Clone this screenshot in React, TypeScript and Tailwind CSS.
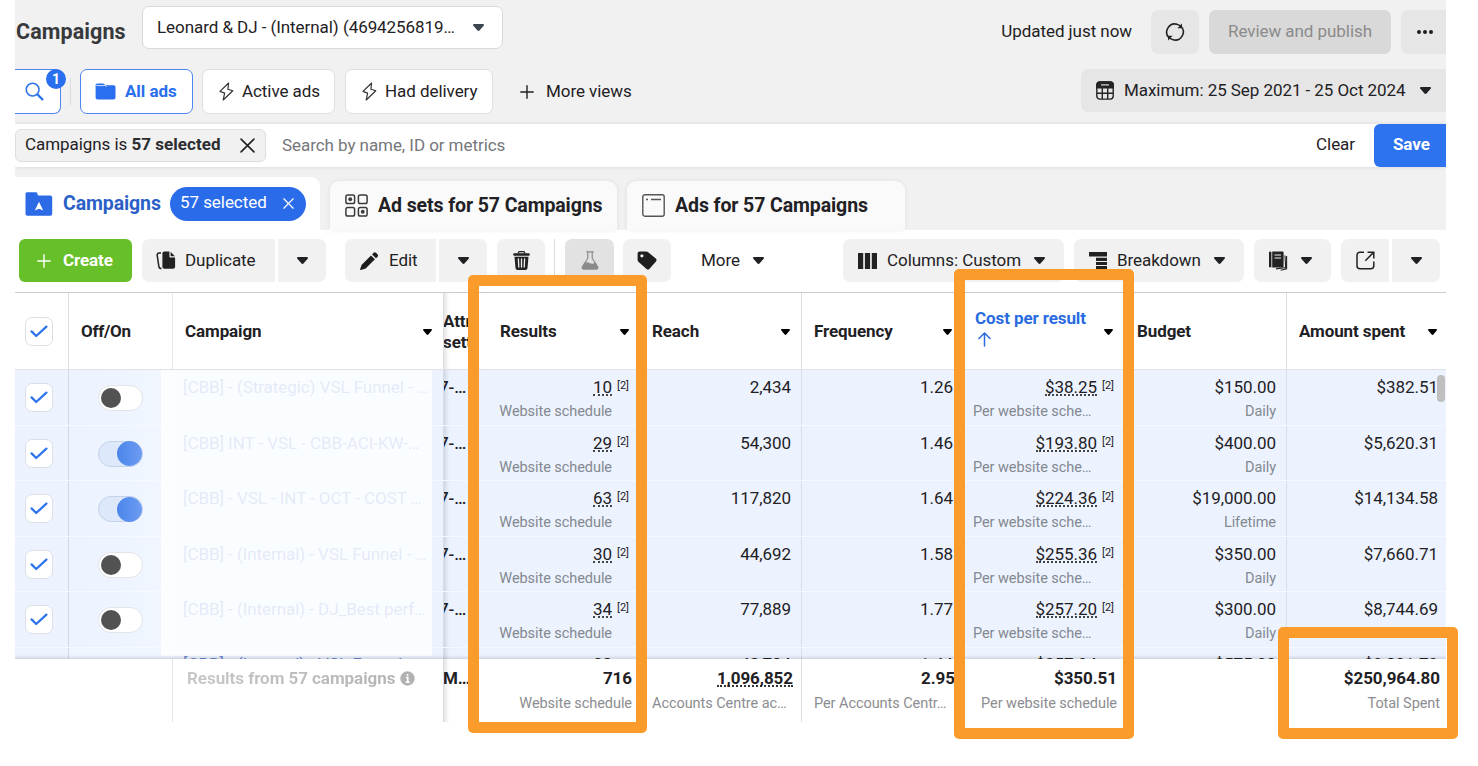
import type { ReactNode } from "react";

function Caret({ small = false }: { small?: boolean }) {
  return (
    <svg className={small ? "block w-[9px] h-[6px] shrink-0" : "block w-[11px] h-[7px] shrink-0"} viewBox="0 0 12 7" preserveAspectRatio="none" fill="currentColor">
      <path d="M1.2 0h9.6c1.1 0 1.5 1.1.8 1.8L7.1 6.5c-.6.6-1.6.6-2.2 0L.4 1.8C-.3 1.1.1 0 1.2 0z" />
    </svg>
  );
}

function Bolt() {
  return (
    <svg className="block w-[15px] h-[19px] shrink-0" viewBox="0 0 15 19" fill="none" stroke="#333" strokeWidth="1.2" strokeLinejoin="round">
      <path d="M9.6 1 1 9.4l4.6 1.7L4.2 18l9.6-9.2-4.9-1.5z" />
    </svg>
  );
}

function Plus() {
  return (
    <svg className="block w-[14px] h-[14px] shrink-0" viewBox="0 0 14 14" stroke="currentColor" strokeWidth="1.4" strokeLinecap="round">
      <path d="M7 .8v12.4M.8 7h12.4" />
    </svg>
  );
}

function Cross({ className }: { className: string }) {
  return (
    <svg className={className} viewBox="0 0 14 14" stroke="currentColor" strokeWidth="1.5" strokeLinecap="round">
      <path d="M1 1l12 12M13 1 1 13" />
    </svg>
  );
}

function Check() {
  return (
    <div className="flex h-[29px] w-[28px] items-center justify-center rounded-[7px] border border-[#dcdfe5] bg-white">
      <svg className="block h-[13px] w-[18px]" viewBox="0 0 18 13" fill="none" stroke="#2f74ea" strokeWidth="2.3" strokeLinecap="round" strokeLinejoin="round">
        <path d="M1.6 6.4 6.2 11 16.4 1.6" />
      </svg>
    </div>
  );
}

function Toggle({ on }: { on: boolean }) {
  return on ? (
    <div className="flex h-[26px] w-[45px] items-center justify-end rounded-full border border-[#c3d2e8] bg-[#dde9fa]">
      <div className="h-[25px] w-[25px] shrink-0 rounded-full bg-linear-to-r from-[#4b86ea] to-[#6d9cf2]" />
    </div>
  ) : (
    <div className="flex h-[26px] w-[45px] items-center rounded-full border border-[#e3e4e8] bg-white pl-[2px]">
      <div className="h-[20px] w-[20px] rounded-full bg-[#525252]" />
    </div>
  );
}

const GRID = "grid grid-cols-[54px_104px_271px_44px_152px_162px_161px_162px_162px_159px]";

function Head({ label, caret = true, className = "pr-[11px]" }: { label: ReactNode; caret?: boolean; className?: string }) {
  return (
    <div className={`flex items-center justify-between pt-[2px] pl-[12px] ${className}`}>
      <span className="whitespace-nowrap">{label}</span>
      {caret && (
        <span className="text-black">
          <Caret small />
        </span>
      )}
    </div>
  );
}

function Noted({ value, sub, left = false }: { value: string; sub: string; left?: boolean }) {
  return (
    <div className={left ? "flex flex-col pr-[11px] pl-[10px]" : "flex flex-col pr-[11px]"}>
      <div className="flex justify-end">
        <span className="mt-[8px] h-[18px] border-b-2 border-dotted border-[#444] leading-[19px]">{value}</span>
        <span className="ml-[5px] pt-[9px] text-[11px] leading-[13px] tracking-normal">[2]</span>
      </div>
      <div className={left ? "mt-[7px] text-[14.5px] leading-[18px] text-[#84888f]" : "mt-[7px] mr-[17px] text-right text-[14.5px] leading-[18px] text-[#84888f]"}>{sub}</div>
    </div>
  );
}

function Plain({ value, sub, className }: { value: string; sub?: string; className: string }) {
  return (
    <div className={`text-right ${className}`}>
      <div className="mt-[8px] h-[18px] leading-[19px]">{value}</div>
      {sub && <div className="mt-[7px] text-[14.5px] leading-[18px] text-[#84888f]">{sub}</div>}
    </div>
  );
}

const rows = [
  { on: false, name: "[CBB] - (Strategic) VSL Funnel - …", res: "10", reach: "2,434", freq: "1.26", cost: "$38.25", budget: "$150.00", per: "Daily", spent: "$382.51" },
  { on: true, name: "[CBB] INT - VSL - CBB-ACI-KW-…", res: "29", reach: "54,300", freq: "1.46", cost: "$193.80", budget: "$400.00", per: "Daily", spent: "$5,620.31" },
  { on: true, name: "[CBB] - VSL - INT - OCT - COST …", res: "63", reach: "117,820", freq: "1.64", cost: "$224.36", budget: "$19,000.00", per: "Lifetime", spent: "$14,134.58" },
  { on: false, name: "[CBB] - (Internal) - VSL Funnel - …", res: "30", reach: "44,692", freq: "1.58", cost: "$255.36", budget: "$350.00", per: "Daily", spent: "$7,660.71" },
  { on: false, name: "[CBB] - (Internal) - DJ_Best perf…", res: "34", reach: "77,889", freq: "1.77", cost: "$257.20", budget: "$300.00", per: "Daily", spent: "$8,744.69" },
];

const nextRow = { name: "[CBB] - (Internal) - VSL Funnel", res: "38", reach: "48,784", freq: "1.44", cost: "$257.94", budget: "$575.00", spent: "$9,801.72" };

export default function App() {
  return (
    <div className="relative h-[766px] w-[1478px] overflow-hidden bg-white font-['Roboto',sans-serif] text-[17px] tracking-[-0.06px] text-[#1f2124]">
      <div className="ml-[15px] w-[1431px] overflow-hidden">
        <header className="h-[230px] bg-[#f1f1f1]">
          <div className="flex h-[69px]">
            <h1 className="ml-[1px] mt-[19px] w-[126px] text-[21.5px] leading-[26px] font-bold tracking-[0.1px] text-[#37393c]">Campaigns</h1>
            <div className="mt-[6px] flex h-[43px] w-[361px] items-center rounded-[7px] border border-[#d8d9db] bg-white pl-[14px] pr-[18px]">
              <span className="flex-1 whitespace-nowrap">Leonard &amp; DJ - (Internal) (4694256819…</span>
              <span className="text-[#3c4650]">
                <Caret />
              </span>
            </div>
            <div className="ml-auto mt-[10px] flex h-[44px] items-center">
              <span className="whitespace-nowrap">Updated just now</span>
              <div className="ml-[19px] flex h-[44px] w-[48px] items-center justify-center rounded-[7px] bg-[#e6e6e6]">
                <svg className="block h-[20px] w-[20px]" viewBox="0 0 20 20" fill="none" stroke="#222" strokeWidth="1.6">
                  <path d="M4.200 16A8.200 8.200 0 0 1 12 2.200M15.800 4A8.200 8.200 0 0 1 8 17.800" />
                  <path d="M11.400 2.200A8.200 8.200 0 0 1 15.600 4M8.600 17.800A8.200 8.200 0 0 1 4.400 16" />
                  <path d="M17 1.600v4.600h-4.600zM3 18.400v-4.600h4.600z" fill="#222" stroke="none" />
                </svg>
              </div>
              <div className="ml-[10px] flex h-[44px] w-[182px] items-center justify-center rounded-[7px] bg-[#d9d9d9] whitespace-nowrap text-[#8b8b8b]">Review and publish</div>
              <div className="ml-[10px] flex h-[44px] w-[45px] items-center gap-[2px] rounded-l-[7px] bg-[#e6e6e6] pl-[16px]">
                <i className="h-[4px] w-[4px] rounded-full bg-[#1f1f1f]" />
                <i className="h-[4px] w-[4px] rounded-full bg-[#1f1f1f]" />
                <i className="h-[4px] w-[4px] rounded-full bg-[#1f1f1f]" />
              </div>
            </div>
          </div>

          <div className="flex h-[55px]">
            <div className="relative flex h-[45px] w-[46px] items-center rounded-r-[7px] border border-l-0 border-[#4d86ef] bg-white pl-[10px]">
              <svg className="block h-[19px] w-[19px]" viewBox="0 0 19 19" fill="none" stroke="#2f74ea" strokeLinecap="round">
                <circle cx="7.6" cy="7.6" r="6.4" strokeWidth="1.6" />
                <path d="M12.6 12.6 17.4 17.4" strokeWidth="2.2" />
              </svg>
              <span className="absolute -top-[1px] left-[31px] h-[20px] w-[20px] rounded-full bg-[#2a6fee] text-center text-[14px] leading-[20px] font-bold tracking-normal text-white">1</span>
            </div>
            <div className="mt-[9px] ml-[9px] h-[27px] w-px bg-[#dcdcdc]" />
            <div className="ml-[9px] flex h-[45px] w-[113px] items-center rounded-[7px] border border-[#4d86ef] bg-white pl-[14px] font-bold text-[#2a6fee]">
              <svg className="mr-[9px] block h-[17px] w-[21px] shrink-0" viewBox="0 0 21 17" fill="#2a6fee">
                <path d="M.6 2.4C.6 1.2 1.4.5 2.6.5H8c.8 0 1.2.3 1.7.9l.5.8h8.3c1.3 0 2 .8 2 2v10.4c0 1.2-.8 2-2 2H2.6c-1.2 0-2-.8-2-2z" />
                <path d="M1.2 2.6h9.4l1.1 1.3" stroke="#fff" strokeWidth=".8" fill="none" />
              </svg>
              <span className="tracking-[-0.05px] whitespace-nowrap">All ads</span>
            </div>
            <div className="ml-[9px] flex h-[45px] w-[133px] items-center rounded-[7px] border border-[#dfdfdf] bg-white pl-[16px]">
              <Bolt />
              <span className="ml-[8px] whitespace-nowrap">Active ads</span>
            </div>
            <div className="ml-[10px] flex h-[45px] w-[148px] items-center rounded-[7px] border border-[#dfdfdf] bg-white pl-[16px]">
              <Bolt />
              <span className="ml-[8px] whitespace-nowrap">Had delivery</span>
            </div>
            <div className="ml-[27px] flex h-[45px] items-center">
              <Plus />
              <span className="ml-[12px] whitespace-nowrap">More views</span>
            </div>
            <div className="ml-auto flex h-[43px] w-[365px] items-center rounded-l-[7px] bg-[#e6e6e6] pl-[15px]">
              <svg className="block h-[19px] w-[18px] shrink-0" viewBox="0 0 18 19" fill="none" stroke="#242424" strokeWidth="1.4">
                <rect x=".8" y=".9" width="16.4" height="17.2" rx="3" />
                <path d="M.8 6.8V3.9c0-1.7 1.3-3 3-3h10.4c1.700 0 3 1.300 3 3v2.900z" fill="#242424" />
                <path d="M5 3.900h8" stroke="#ddd" strokeWidth="1.200" />
                <path d="M1 12.300h16M6.300 7v11M11.700 7v11" />
              </svg>
              <span className="ml-[10px] w-[296px] whitespace-nowrap">Maximum: 25 Sep 2021 - 25 Oct 2024</span>
              <Caret />
            </div>
          </div>

          <div className="flex h-[43px] items-center bg-white shadow-[0_0_4px_rgba(0,0,0,0.12)]">
            <div className="flex h-[33px] w-[251px] items-center rounded-[6px] border border-[#dedede] bg-[#f1f1f1] pl-[9px]">
              <span className="w-[215px] pb-px whitespace-nowrap">
                Campaigns is <b className="font-bold tracking-[0.04px] text-[#2b2d30]">57 selected</b>
              </span>
              <Cross className="block h-[15px] w-[15px] shrink-0" />
            </div>
            <span className="ml-[16px] whitespace-nowrap text-[#75777a]">Search by name, ID or metrics</span>
            <span className="ml-auto pb-px">Clear</span>
            <div className="ml-[19px] flex h-[43px] w-[72px] items-center rounded-l-[6px] bg-[#2d72ee] pb-px pl-[19px] font-bold tracking-[-0.1px] text-white">Save</div>
          </div>

          <div className="flex h-[63px] items-end">
            <div className="flex h-[53px] w-[305px] items-center rounded-tr-[9px] bg-white pl-[10px]">
              <svg className="block h-[24px] w-[28px] shrink-0" viewBox="0 0 28 24">
                <path d="M.5 2C.5.800 1.300.200 2.400.200h8.200c1 0 1.500.500 1.800 1.400l.500 1.800h12.300c1.200 0 2 .800 2 2v16.400c0 1.200-.800 2-2 2H2.400C1.200 23.800.500 23 .500 21.800z" fill="#2d6ae6" />
                <path d="M14 9.800 18.200 18.500 14 16.800 9.800 18.500z" fill="#fff" />
              </svg>
              <span className="ml-[10px] w-[107px] text-[19.5px] font-bold tracking-[-0.1px] text-[#2b5fc8]">Campaigns</span>
              <div className="flex h-[34px] w-[136px] items-center rounded-full bg-[#2a6be9] pb-px pl-[10px] text-white">
                <span className="w-[103px] whitespace-nowrap">57 selected</span>
                <Cross className="block h-[11px] w-[11px] shrink-0" />
              </div>
            </div>
            <div className="ml-[10px] flex h-[49px] w-[287px] items-center rounded-t-[9px] bg-[#fafafa] pl-[15px] shadow-[0_0_5px_rgba(0,0,0,0.08)]">
              <svg className="block h-[23px] w-[23px] shrink-0" viewBox="0 0 23 23" fill="none" stroke="#3a3a3a" strokeWidth="1.500">
                <rect x=".900" y=".900" width="8.700" height="8.700" rx="1.800" />
                <rect x="13.400" y=".900" width="8.700" height="8.700" rx="1.800" />
                <rect x=".900" y="13.400" width="8.700" height="8.700" rx="1.800" />
                <rect x="13.400" y="13.400" width="8.700" height="8.700" rx="1.800" />
                <g fill="#3a3a3a" stroke="none">
                  <circle cx="5.250" cy="5.250" r="1.900" />
                  <circle cx="17.750" cy="17.750" r="1.900" />
                </g>
              </svg>
              <span className="ml-[10px] text-[19.5px] font-bold tracking-[-0.1px] whitespace-nowrap">Ad sets for 57 Campaigns</span>
            </div>
            <div className="ml-[10px] flex h-[49px] w-[278px] items-center rounded-t-[9px] bg-[#fafafa] pl-[15px] shadow-[0_0_5px_rgba(0,0,0,0.08)]">
              <svg className="block h-[23px] w-[23px] shrink-0" viewBox="0 0 23 23" fill="none" stroke="#555" strokeWidth="1.400">
                <rect x=".800" y=".800" width="21.400" height="21.400" rx="2" />
                <path d="M4 5.500h2M9 5.500h10" />
              </svg>
              <span className="ml-[10px] text-[19.5px] font-bold tracking-[-0.1px] whitespace-nowrap">Ads for 57 Campaigns</span>
            </div>
          </div>
        </header>

        <div className="flex h-[62px] bg-white pt-[9px] pl-[4px]">
          <div className="flex h-[43px] w-[113px] items-center rounded-[6px] bg-[#67bf2a] pl-[18px] font-bold text-white">
            <Plus />
            <span className="ml-[12px] tracking-[-0.1px]">Create</span>
          </div>
          <div className="ml-[10px] flex h-[43px] w-[133px] items-center rounded-l-[7px] bg-[#f1f1f1] pl-[14px]">
            <svg className="block h-[19px] w-[20px] shrink-0" viewBox="0 0 20 19">
              <path d="M8.400.500h5v5c0 .700.400 1.100 1.100 1.100h4.600v9.200c0 1.200-.800 2-2 2H8.400c-1.200 0-2-.800-2-2V2.500c0-1.200.800-2 2-2z" fill="#222" />
              <path d="M14.600.700v4.600h4.300z" fill="#222" />
              <path d="M5 2H3.100C1.700 2 1 3 1.200 4.300l1.700 11.300c.200 1.400 1 2 2.600 2" fill="none" stroke="#222" strokeWidth="1.500" />
            </svg>
            <span className="ml-[9px]">Duplicate</span>
          </div>
          <div className="ml-[3px] flex h-[43px] w-[48px] items-center justify-center rounded-r-[7px] bg-[#f1f1f1]">
            <Caret />
          </div>
          <div className="ml-[19px] flex h-[43px] w-[91px] items-center rounded-l-[7px] bg-[#f1f1f1] pl-[15px]">
            <svg className="block h-[18px] w-[19px] shrink-0" viewBox="0 0 19 18" fill="#1c1c1c">
              <path d="M13.600.800c.800-.700 1.700-.700 2.400 0l1.600 1.600c.700.700.700 1.600 0 2.400l-1.600 1.500-3.900-3.900zM11 3.400l3.900 3.900-9 8.900c-.300.300-.600.500-1 .600L.800 18c-.500.100-.800-.200-.700-.700l1.300-3.900c.100-.400.300-.700.600-1z" />
            </svg>
            <span className="ml-[10px]">Edit</span>
          </div>
          <div className="ml-[3px] flex h-[43px] w-[48px] items-center justify-center rounded-r-[7px] bg-[#f1f1f1]">
            <Caret />
          </div>
          <div className="ml-[10px] flex h-[43px] w-[48px] items-center justify-center rounded-[7px] bg-[#f1f1f1]">
            <svg className="block h-[19px] w-[17px]" viewBox="0 0 17 19">
              <path d="M5.200 2.400C5.200 1.200 6 .600 7 .600h3c1 0 1.800.600 1.800 1.800" fill="none" stroke="#222" strokeWidth="1.300" />
              <rect x=".200" y="2.200" width="16.600" height="2.600" rx="1.200" fill="#222" />
              <path d="M1.500 5.800h14l-1 11.300c-.100 1.100-.800 1.800-1.900 1.800H4.400c-1.100 0-1.800-.700-1.900-1.800z" fill="#222" />
              <path d="M5.400 8l.400 8M8.500 8v8M11.600 8l-.400 8" stroke="#f1f1f1" strokeWidth="1.300" strokeLinecap="round" />
            </svg>
          </div>
          <div className="ml-[9px] h-[43px] w-px bg-[#dcdcdc]" />
          <div className="ml-[10px] flex h-[43px] w-[49px] items-center justify-center rounded-[7px] bg-[#e2e2e2]">
            <svg className="block h-[19px] w-[18px]" viewBox="0 0 18 19">
              <path d="M5.300.800h7.400M6.800 1v6.200L1.500 15.600c-.700 1.400 0 2.600 1.500 2.600h12c1.500 0 2.200-1.200 1.500-2.600L11.200 7.200V1" fill="none" stroke="#8a8a8a" strokeWidth="1.200" />
              <path d="M3.800 12c2-1.200 3.600-.600 5.200.200 1.700.800 3.600.600 5.100-.700l2.500 4.300c.600 1.300 0 2.300-1.400 2.300H2.800c-1.300 0-2-1-1.300-2.300z" fill="#8a8a8a" />
            </svg>
          </div>
          <div className="ml-[9px] flex h-[43px] w-[48px] items-center justify-center rounded-[7px] bg-[#f1f1f1]">
            <svg className="block h-[19px] w-[20px]" viewBox="0 0 20 19">
              <path d="M.600 2.600C.600 1.200 1.500.400 2.800.400h6.400c.700 0 1.200.200 1.700.600l7.900 6.600c.900.800 1 1.900.200 2.800l-6.700 7.500c-.800.900-1.900.900-2.800.100L1.400 10.800c-.500-.500-.800-1-.800-1.700z" fill="#1f1f1f" />
              <circle cx="4.900" cy="4.800" r="1.600" fill="#f1f1f1" />
            </svg>
          </div>
          <div className="ml-[30px] flex h-[43px] w-[142px] items-center">
            <span className="w-[52px]">More</span>
            <Caret />
          </div>
          <div className="flex h-[43px] w-[221px] items-center rounded-[7px] bg-[#f1f1f1] pl-[15px]">
            <svg className="block h-[16px] w-[19px] shrink-0" viewBox="0 0 19 16" fill="#222">
              <path d="M0 0h5.200v16H0zM6.900 0h5.200v16H6.900zM13.800 0H19v16h-5.200z" />
            </svg>
            <span className="ml-[10px] w-[147px] whitespace-nowrap">Columns: Custom</span>
            <Caret />
          </div>
          <div className="ml-[10px] flex h-[43px] w-[170px] items-center rounded-[7px] bg-[#f1f1f1] pl-[15px]">
            <svg className="block h-[17px] w-[18px] shrink-0" viewBox="0 0 18 17" fill="#222">
              <path d="M0 0h18v4.600H0zM7 5.800h11v3.200H7zM7 10h11v3H7zM7 14h11v3H7z" />
            </svg>
            <span className="ml-[10px] w-[97px] whitespace-nowrap">Breakdown</span>
            <Caret />
          </div>
          <div className="ml-[10px] flex h-[43px] w-[77px] items-center rounded-[7px] bg-[#f1f1f1] pl-[15px]">
            <svg className="mr-[13px] block h-[20px] w-[19px] shrink-0" viewBox="0 0 19 20">
              <path d="M0 .800h2.400v15.400H0zM3.200.600h10.200c.800 0 1.200.400 1.200 1.200v13.400c0 .800-.400 1.200-1.200 1.200H3.200z" fill="#222" />
              <path d="M5.500 4h6.500M5.500 7h6.500" stroke="#f1f1f1" strokeWidth="1.200" />
              <path d="M16 4.500l.700 12.100-9.700 1.300M17.600 5v12.800l-6 1.400" fill="none" stroke="#222" strokeWidth="1.100" />
            </svg>
            <Caret />
          </div>
          <div className="ml-[10px] flex h-[43px] w-[48px] items-center justify-center rounded-l-[7px] bg-[#f1f1f1]">
            <svg className="block h-[19px] w-[19px]" viewBox="0 0 19 19" fill="none" stroke="#222" strokeWidth="1.500">
              <path d="M8 1.200H4C2.200 1.200 1 2.400 1 4.200v10.600c0 1.800 1.200 3 3 3h10.800c1.800 0 3-1.200 3-3V10.500M11.500 1.200h6.300v6.300M17.600 1.400 9.300 9.700" />
            </svg>
          </div>
          <div className="ml-[3px] flex h-[43px] w-[48px] items-center justify-center rounded-r-[7px] bg-[#f1f1f1]">
            <Caret />
          </div>
        </div>

        <main className="relative">
          <div className={`${GRID} h-[78px] border-t border-b border-t-[#c9ccd0] border-b-[#dfe1e5] font-bold tracking-[-0.1px]`}>
            <div className="flex items-center border-r border-[#dcdee2] pl-[10px]">
              <Check />
            </div>
            <div className="flex items-center border-r border-[#e6e7ea] pt-[2px] pl-[12px] tracking-[-0.3px]">Off/On</div>
            <Head label="Campaign" className="border-r border-[#dcdee2] pr-[11px]" />
            <div className="overflow-hidden pt-[18px] leading-[21px] whitespace-nowrap shadow-[inset_5px_0_4px_-3px_rgba(0,0,0,0.13)]">
              <div className="-ml-[1px]">
                Attr
                <br />
                sett
              </div>
            </div>
            <Head label="Results" />
            <Head label="Reach" className="border-r border-[#dcdee2] pr-[11px]" />
            <Head label="Frequency" />
            <div className="flex items-center justify-between pr-[12px] pl-[12px]">
              <div className="pb-[8px] text-[#2a6bdf]">
                <div className="leading-[22px] whitespace-nowrap">Cost per result</div>
                <svg className="mt-[3px] ml-[3px] block h-[15px] w-[13px]" viewBox="0 0 13 15" fill="none" stroke="currentColor" strokeWidth="1.500" strokeLinecap="round" strokeLinejoin="round">
                  <path d="M6.500 14V1M1 6.500 6.500 1 12 6.500" />
                </svg>
              </div>
              <span className="pt-[2px] text-black">
                <Caret small />
              </span>
            </div>
            <Head label="Budget" caret={false} className="border-r border-[#dcdee2] pr-[11px]" />
            <Head label="Amount spent" className="pr-[9px]" />
          </div>

          <div className="relative h-[289px] overflow-hidden bg-[#ecf3ff]">
            {rows.map((r) => (
              <div key={r.name} className={`${GRID} h-[55.5px] border-b border-[#f6f9ff]`}>
                <div className="border-r border-[#d3d9e2] pt-[13px] pl-[10px]">
                  <Check />
                </div>
                <div className="bg-linear-to-r from-[#ecf3ff] to-[#f1f6ff] pt-[15px] pl-[29px]">
                  <Toggle on={r.on} />
                </div>
                <div className="border-r border-[#d5dae3] pt-[8px] pl-[10px] leading-[19px] whitespace-nowrap text-[#5a75cc]">{r.name}</div>
                <div className="overflow-hidden pt-[8px] leading-[19px] font-medium shadow-[inset_5px_0_4px_-3px_rgba(0,0,0,0.13)]">
                  <span className="-ml-[5px]">7-…</span>
                </div>
                <Noted value={r.res} sub="Website schedule" />
                <Plain value={r.reach} className="border-r border-[#d9dee7] pr-[10px]" />
                <Plain value={r.freq} className="pr-[10px]" />
                <Noted left value={r.cost} sub="Per website sche…" />
                <Plain value={r.budget} sub={r.per} className="border-r border-[#d9dee7] pr-[10px]" />
                <Plain value={r.spent} className="pr-[8px]" />
              </div>
            ))}
            <div className={`${GRID} h-[11.5px] overflow-hidden text-right leading-[19px]`}>
              <div className="border-r border-[#d3d9e2]" />
              <div className="bg-[#eff5ff]" />
              <div className="border-r border-[#d5dae3] pt-[7px] pl-[10px] text-left whitespace-nowrap text-[#6f86cf]">{nextRow.name}</div>
              <div className="shadow-[inset_5px_0_4px_-3px_rgba(0,0,0,0.13)]" />
              <div className="pt-[7px] pr-[28px]">{nextRow.res}</div>
              <div className="border-r border-[#d9dee7] pt-[7px] pr-[10px]">{nextRow.reach}</div>
              <div className="pt-[7px] pr-[10px]">{nextRow.freq}</div>
              <div className="pt-[7px] pr-[28px]">{nextRow.cost}</div>
              <div className="border-r border-[#d9dee7] pt-[7px] pr-[10px]">{nextRow.budget}</div>
              <div className="pt-[7px] pr-[8px]">{nextRow.spent}</div>
            </div>
            <div className="absolute top-0 left-[146px] h-[286px] w-[271px] bg-[#fdfeff]/85" />
            <div className="absolute top-[5px] right-[1px] h-[27px] w-[8px] rounded-full bg-[#bfbfbf]" />
            <div className="absolute bottom-0 left-0 h-[4px] w-full bg-linear-to-b from-transparent to-black/12" />
          </div>

          <div className={`${GRID} h-[63px] bg-white pt-[10px]`}>
            <div />
            <div className="-mt-[10px] border-r border-[#e4e4e4]" />
            <div className="-mt-[10px] flex items-start border-r border-[#dcdee2] pt-[10px] pl-[14px] leading-[18px] font-bold tracking-[-0.05px]">
              <span className="bg-linear-to-r from-[#c8c8c8] to-[#b4b4b4] bg-clip-text whitespace-nowrap text-transparent">Results from 57 campaigns</span>
              <svg className="mt-[2px] ml-[5px] block h-[15px] w-[15px] shrink-0" viewBox="0 0 15 15">
                <circle cx="7.500" cy="7.500" r="7.200" fill="#b2b2b2" />
                <path d="M7.500 3v1.800M6 6.500h1.700V11M5.800 11.200h3.700" stroke="#fff" strokeWidth="1.700" fill="none" />
              </svg>
            </div>
            <div className="-mt-[10px] overflow-hidden pt-[10px] leading-[18px] font-bold whitespace-nowrap shadow-[inset_5px_0_4px_-3px_rgba(0,0,0,0.13)]">
              <span className="-ml-[1px]">M…</span>
            </div>
            <div className="pr-[8px] text-right">
              <div className="leading-[18px] font-bold">716</div>
              <div className="mt-[8px] text-[14.5px] leading-[18px] text-[#8b8d91]">Website schedule</div>
            </div>
            <div className="-mt-[10px] border-r border-[#dcdee2] pt-[10px] pr-[8px] pl-[12px]">
              <div className="flex justify-end">
                <span className="h-[18px] border-b-2 border-dotted border-[#333] leading-[18px] font-bold">1,096,852</span>
              </div>
              <div className="mt-[8px] text-[14.5px] leading-[18px] whitespace-nowrap text-[#8b8d91]">Accounts Centre ac…</div>
            </div>
            <div className="pr-[8px] pl-[12px]">
              <div className="text-right leading-[18px] font-bold">2.95</div>
              <div className="mt-[8px] text-[14.5px] leading-[18px] whitespace-nowrap text-[#8b8d91]">Per Accounts Centr…</div>
            </div>
            <div className="pr-[8px] text-right">
              <div className="leading-[18px] font-bold">$350.51</div>
              <div className="mt-[8px] text-[14.5px] leading-[18px] whitespace-nowrap text-[#8b8d91]">Per website schedule</div>
            </div>
            <div />
            <div className="pr-[6px] text-right">
              <div className="leading-[18px] font-bold">$250,964.80</div>
              <div className="mt-[8px] text-[14.5px] leading-[18px] text-[#8b8d91]">Total Spent</div>
            </div>
          </div>
        </main>
      </div>

      <div className="absolute top-[275px] left-[468px] h-[458px] w-[179px] rounded-[5px] border-[11px] border-[#fb9b2c]" />
      <div className="absolute top-[269px] left-[954px] h-[470px] w-[180px] rounded-[5px] border-[11px] border-[#fb9b2c]" />
      <div className="absolute top-[627px] left-[1278px] h-[112px] w-[180px] rounded-[5px] border-[11px] border-[#fb9b2c]" />
    </div>
  );
}
